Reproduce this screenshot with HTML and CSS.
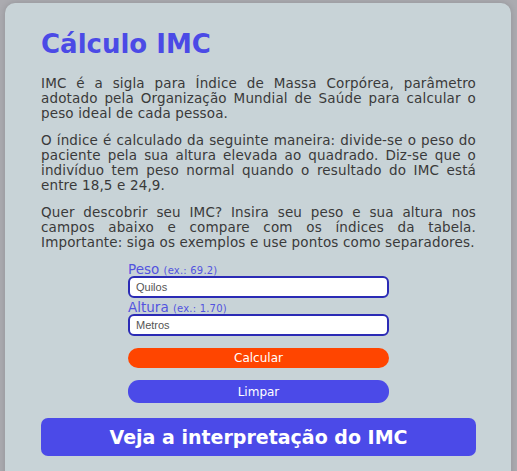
FILE: index.html
```html
<!DOCTYPE html>
<html lang="pt-BR">
<head>
<meta charset="utf-8">
<title>Cálculo IMC</title>
<link rel="stylesheet" href="styles.css">
</head>
<body>
<main class="card">
  <h1 class="title">Cálculo IMC</h1>
  <p class="text">IMC é a sigla para Índice de Massa Corpórea, parâmetro adotado pela Organização Mundial de Saúde para calcular o peso ideal de cada pessoa.</p>
  <p class="text">O índice é calculado da seguinte maneira: divide-se o peso do paciente pela sua altura elevada ao quadrado. Diz-se que o indivíduo tem peso normal quando o resultado do IMC está entre 18,5 e 24,9.</p>
  <p class="text">Quer descobrir seu IMC? Insira seu peso e sua altura nos campos abaixo e compare com os índices da tabela. Importante: siga os exemplos e use pontos como separadores.</p>
  <form class="form">
    <label class="label" for="peso">Peso <span class="hint">(ex.: 69.2)</span></label>
    <input class="field" id="peso" type="text" placeholder="Quilos">
    <label class="label" for="altura">Altura <span class="hint">(ex.: 1.70)</span></label>
    <input class="field" id="altura" type="text" placeholder="Metros">
    <button class="btn btn-calc" type="button">Calcular</button>
    <button class="btn btn-clear" type="reset">Limpar</button>
  </form>
  <button class="big-btn" type="button">Veja a interpretação do IMC</button>
</main>
</body>
</html>
```

FILE: styles.css
```css
html, body {
  margin: 0;
  padding: 0;
}
body {
  background: #ababb0;
  font-family: "DejaVu Sans", sans-serif;
  height: 471px;
  overflow: hidden;
}
.card {
  box-sizing: border-box;
  margin: 3px 6px 0 5px;
  background: #c8d3d7;
  border-radius: 10px;
  padding: 26px 35px 20px 36px;
  height: 480px;
  box-shadow: 0 0 6px rgba(0,0,0,0.15);
}
.title {
  margin: 0 0 17px;
  font-size: 26px;
  line-height: 30px;
  font-weight: bold;
  color: #4b4ae6;
}
.text {
  margin: 0 0 12px;
  font-size: 13.5px;
  letter-spacing: 0.15px;
  line-height: 15px;
  color: #3a3a3a;
  text-align: justify;
}
.form {
  width: 261px;
  margin: 12px auto 0;
  display: flex;
  flex-direction: column;
}
.label {
  color: #5353df;
  font-size: 13.5px;
  line-height: 14px;
  height: 14px;
}
.hint {
  font-size: 10px;
  letter-spacing: 0.2px;
}
.field {
  box-sizing: border-box;
  height: 22px;
  margin: 0 0 2px;
  border: 2px solid #2b2bb5;
  border-radius: 6px;
  background: #fff;
  padding: 0 6px;
  font-family: "Liberation Sans", Arial, sans-serif;
  font-size: 11px;
  color: #333;
}
.field::placeholder {
  color: #555;
}
.btn {
  box-sizing: border-box;
  border: none;
  border-radius: 11px;
  color: #fff;
  font-family: "DejaVu Sans", sans-serif;
  font-size: 12px;
  padding: 0;
}
.btn-calc {
  height: 20px;
  margin-top: 10px;
  background: #ff4500;
}
.btn-clear {
  height: 23px;
  margin-top: 12px;
  background: #4b4ae8;
}
.big-btn {
  display: block;
  box-sizing: border-box;
  width: 100%;
  height: 38px;
  margin-top: 15px;
  border: none;
  border-radius: 7px;
  background: #4b4ae8;
  color: #fff;
  font-family: "DejaVu Sans", sans-serif;
  font-weight: bold;
  font-size: 19px;
  padding: 0;
}
```
